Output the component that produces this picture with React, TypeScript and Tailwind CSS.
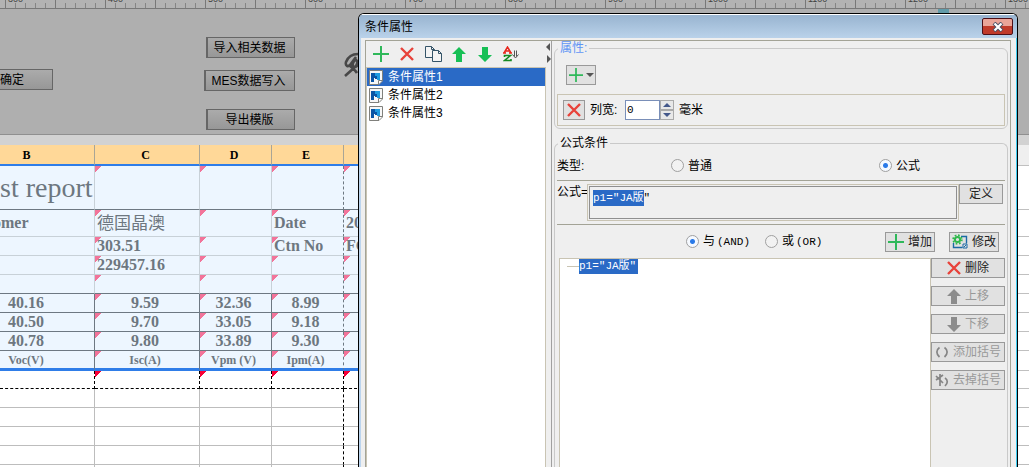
import { useEffect, useRef, type ReactNode } from "react";
import clsx from "clsx";

const majors = [300, 400, 500, 600, 700, 800, 900, 1000, 1100, 1200, 1300];

function Ruler() {
  return (
    <svg className="block h-[9px] w-full bg-[#b3b3b3]" aria-hidden="true">
      <defs>
        <pattern id="minor" width="10" height="9" patternUnits="userSpaceOnUse">
          <rect x="5" y="3" width="1" height="5" fill="#858585" />
        </pattern>
        <pattern id="major" width="50" height="9" patternUnits="userSpaceOnUse">
          <rect x="5" y="0" width="1" height="8" fill="#787878" />
        </pattern>
      </defs>
      <rect width="100%" height="9" fill="url(#minor)" />
      <rect width="100%" height="9" fill="url(#major)" />
      <rect y="8" width="100%" height="1" fill="#787878" />
      {majors.map((n, i) => (
        <text key={n} x={8 + i * 100} y="2" fontSize="9" fill="#404040">
          {n}
        </text>
      ))}
    </svg>
  );
}

const formButton =
  "h-[21px] border border-l-2 border-[#666] bg-linear-to-b from-[#ababab] to-[#979797] pr-[3px] text-xs leading-none text-black";

function FormArea() {
  return (
    <div className="flex h-[126px] items-start border-b border-[#8f8f8f] bg-[#afafaf]">
      <button className="mt-[60px] h-[21px] w-[53px] border border-l-0 border-[#666] bg-linear-to-b from-[#ababab] to-[#979797] text-left text-xs leading-none">
        确定
      </button>
      <div className="ml-[151px] mt-7 flex w-[91px] flex-col items-end">
        <button className={clsx(formButton, "w-[89px]")}>导入相关数据</button>
        <button className={clsx(formButton, "mt-3 w-[91px]")}>MES数据写入</button>
        <button className={clsx(formButton, "mt-[18px] w-[89px]")}>导出模版</button>
      </div>
      <svg className="ml-[49px] mt-[43px]" width="20" height="26" viewBox="0 0 20 26" fill="none" stroke="#484848" strokeWidth="2.600" aria-hidden="true">
        <path d="M14 2C8 2 4 5 2 10c-1 4 2 5 4 3l6-8M1 24l10-9c3-3 3-6 1-7-2 0-4 4-3 6s3 1 5-1M6 13c0 3 4 3 7 8" />
      </svg>
      <div className="ml-auto mr-20 h-1 w-[11px] bg-[#629ba9]" />
    </div>
  );
}

const dark = "border-b-[#6d7882]";
const pale = "border-b-[#c8d1d8]";

type Row = { h: string; line: string; side: string; font: string; center?: boolean; cells: string[] };

const rows: Row[] = [
  { h: "h-[44px]", line: dark, side: "border-r-[#c8d1d8]", font: "text-[28px]", cells: ["st report", "", "", "", ""] },
  { h: "h-[27px]", line: pale, side: "border-r-[#c8d1d8]", font: "text-[16px] font-bold", cells: ["omer", "德国晶澳", "", "Date", "20"] },
  { h: "h-[19px]", line: pale, side: "border-r-[#c8d1d8]", font: "text-[16px] font-bold", cells: ["", "303.51", "", "Ctn No", "FC"] },
  { h: "h-[19px]", line: pale, side: "border-r-[#c8d1d8]", font: "text-[16px] font-bold", cells: ["", "229457.16", "", "", ""] },
  { h: "h-[19px]", line: dark, side: "border-r-[#c8d1d8]", font: "text-[16px]", cells: ["", "", "", "", ""] },
  { h: "h-[19px]", line: dark, side: "border-r-[#6d7882]", font: "text-[16px] font-bold", center: true, cells: ["40.16", "9.59", "32.36", "8.99", ""] },
  { h: "h-[19px]", line: dark, side: "border-r-[#6d7882]", font: "text-[16px] font-bold", center: true, cells: ["40.50", "9.70", "33.05", "9.18", ""] },
  { h: "h-[19px]", line: dark, side: "border-r-[#6d7882]", font: "text-[16px] font-bold", center: true, cells: ["40.78", "9.80", "33.89", "9.30", ""] },
  { h: "h-[20px]", line: "border-b-[3px] border-b-[#2f7de8]", side: "border-r-[#6d7882]", font: "text-[12px] font-bold", center: true, cells: ["Voc(V)", "Isc(A)", "Vpm (V)", "Ipm(A)", ""] },
];

const pinkCorner =
  "bg-[linear-gradient(to_bottom_right,#f2749a_50%,transparent_50%)] bg-[length:7px_6px] bg-no-repeat";
const redCorner =
  "bg-[linear-gradient(to_bottom_right,#f80038_50%,transparent_50%)] bg-[length:7px_6px] bg-no-repeat";

function Sheet() {
  return (
    <table className="w-full table-fixed border-separate border-spacing-0 bg-white font-['Liberation_Serif','Noto_Sans_CJK_SC',serif] leading-none text-[#6d7780]">
      <colgroup>
        <col className="w-[95px]" />
        <col className="w-[105px]" />
        <col className="w-[72px]" />
        <col className="w-[72px]" />
        <col />
        <col className="w-[120px]" />
      </colgroup>
      <thead>
        <tr className="h-[21px]">
          {["B", "C", "D", "E", ""].map((name, i) => (
            <th
              key={i}
              className={clsx(
                "border-b-2 border-r border-b-[#2f7de8] border-r-[#a9a596] bg-[#ffd898] p-0 text-[12px] font-bold text-black",
                i === 0 ? "pr-[41px]" : "pr-[3px]",
              )}
            >
              {name}
            </th>
          ))}
          <th className="border-b border-[#c0c0c0] bg-[#efefef] p-0" />
        </tr>
      </thead>
      <tbody>
        {rows.map((row, r) => (
          <tr key={r} className={row.h}>
            {row.cells.map((cell, c) => (
              <td
                key={c}
                className={clsx(
                  "overflow-hidden whitespace-nowrap border-b border-r bg-[#edf6ff] p-0",
                  row.line,
                  c === 3 ? "border-dashed border-r-[#6d7882] [border-bottom-style:solid]" : row.side,
                  cell === "德国晶澳" ? "text-[17px] font-normal" : row.font,
                  c > 0 && pinkCorner,
                  row.center ? "text-center" : c > 0 && "pl-[2px]",
                  row.center && (c === 0 ? "pr-[42px]" : "pr-[4px]"),
                  cell === "omer" && "indent-[-7px]",
                )}
              >
                {cell}
              </td>
            ))}
            <td className="border-b border-[#c0c0c0] p-0" />
          </tr>
        ))}
        <tr className="h-[18px]">
          {[0, 1, 2, 3, 4].map((c) => (
            <td key={c} className={clsx("border-b border-r border-dashed border-black p-0", c > 0 && redCorner)} />
          ))}
          <td className="border-b border-[#c0c0c0] p-0" />
        </tr>
        {[0, 1, 2, 3, 4].map((r) => (
          <tr key={r} className="h-[19px]">
            {[0, 1, 2, 3, 4, 5].map((c) => (
              <td
                key={c}
                className={clsx(
                  "border-b border-b-[#bdbdbd] p-0",
                  c < 5 && "border-r",
                  c === 3 ? "border-dashed border-r-black [border-bottom-style:solid]" : "border-r-[#bdbdbd]",
                )}
              />
            ))}
          </tr>
        ))}
      </tbody>
    </table>
  );
}

function PlusIcon({ size = 16 }: { size?: number }) {
  return (
    <svg width={size} height={size} viewBox="0 0 16 16" fill="#2fb85a" aria-hidden="true">
      <path d="M7 0h2v7h7v2H9v7H7V9H0V7h7z" />
    </svg>
  );
}

function CrossIcon() {
  return (
    <svg width="14" height="14" viewBox="0 0 14 14" stroke="#e8423a" strokeWidth="2.4" aria-hidden="true">
      <path d="M1 1l12 12M13 1L1 13" />
    </svg>
  );
}

function ArrowIcon({ down, fill }: { down?: boolean; fill: string }) {
  return (
    <svg width="14" height="15" viewBox="0 0 14 15" fill={fill} aria-hidden="true">
      <path d={down ? "M4 0h6v8h4l-7 7-7-7h4z" : "M4 15h6V7h4L7 0 0 7h4z"} />
    </svg>
  );
}

function CopyIcon() {
  return (
    <svg width="17" height="16" viewBox="0 0 17 16" fill="#f4f4f4" stroke="#355468" aria-hidden="true">
      <path d="M.5.5h6l3 3v8h-9z" />
      <path d="M6.500 .5v3h3" fill="none" />
      <path d="M7.500 4.500h6l3 3v8h-9z" />
      <path d="M13.500 4.500v3h3" fill="none" />
    </svg>
  );
}

function SortIcon() {
  return (
    <svg width="16" height="16" viewBox="0 0 16 16" fill="none" aria-hidden="true">
      <path d="M1 7l3.500-6L8 7M2.500 5h4M0 7h3M6 7h3" stroke="#e8271c" strokeWidth="1.500" />
      <path d="M1.500 11V9.500h6l-6 5H8V13" stroke="#168a22" strokeWidth="1.600" />
      <path d="M11.500 4.500v6M13.500 4.500v6M9.500 8.500l3 3.500 3-3.500" stroke="#555" />
    </svg>
  );
}

function SheetIcon() {
  return (
    <svg width="14" height="15" viewBox="0 0 14 15" aria-hidden="true">
      <path d="M.5.5h13v10.500l-3.500 3.500H.5z" fill="#f7f7f7" stroke="#80807c" />
      <path d="M2 3h4v3h2v3H6v-1H5v4H2z" fill="#0b55a5" />
      <path d="M6 3h5v7H8V6H6z" fill="#1f9be0" />
      <path d="M9.500 14v-3.500h3.500" fill="#fff" stroke="#80807c" />
    </svg>
  );
}

function EditIcon() {
  return (
    <svg width="16" height="15" viewBox="0 0 16 15" fill="none" aria-hidden="true">
      <path d="M9 2.500h5.500v7M1.500 9v4.500h9" stroke="#1b6aa5" strokeWidth="1.400" />
      <path d="M11 10h4v4h-4zM12 13l2-2" stroke="#1b6aa5" />
      <circle cx="5.500" cy="5.500" r="2.600" stroke="#2fb84c" strokeWidth="2" />
      <circle cx="5.500" cy="5.500" r="4.400" stroke="#2fb84c" strokeWidth="1.600" strokeDasharray="1.730 1.730" />
    </svg>
  );
}

function BracketIcon({ struck }: { struck?: boolean }) {
  return (
    <svg width="14" height="13" viewBox="0 0 14 13" fill="none" stroke="#858585" strokeWidth="1.700" aria-hidden="true">
      {struck ? (
        <path d="M1 2l7 7M8 1L1 6M5 0v12M10 4c3 2 3 5 0 8" />
      ) : (
        <path d="M4.500 1.500C1 4 1 8 4.500 11M9.500 1.500C13 4 13 8 9.500 11" />
      )}
    </svg>
  );
}

const btn = "flex h-5 items-center justify-center border border-[#999] bg-[#e1e1e1] text-xs leading-none";

function SideButton({ icon, label, disabled }: { icon: ReactNode; label: string; disabled?: boolean }) {
  return (
    <button disabled={disabled} className={clsx(btn, "w-full gap-1", disabled ? "text-[#999]" : "text-[#222]")}>
      {icon}
      {label}
    </button>
  );
}

function Radio({ name, label, mono, checked }: { name: string; label: string; mono?: string; checked?: boolean }) {
  return (
    <label className="flex items-center gap-1">
      <input
        type="radio"
        name={name}
        defaultChecked={checked}
        className="h-[13px] w-[13px] appearance-none rounded-full border border-[#a0a0a0] bg-[#f2f2f2] checked:bg-[radial-gradient(circle,#2a7ae8_2px,#f5f9ff_3px)]"
      />
      <span>
        {label}
        {mono && <span className="pl-[2px] font-['Liberation_Mono',monospace] text-[11px]">{mono}</span>}
      </span>
    </label>
  );
}

function ToolButton({ label, children }: { label: string; children: ReactNode }) {
  return (
    <button aria-label={label} className="flex w-[26px] items-center justify-center">
      {children}
    </button>
  );
}

function ConditionList() {
  return (
    <div className="flex flex-col">
      <div className="flex h-[26px] items-center pl-[2px]">
        <ToolButton label="新增"><PlusIcon /></ToolButton>
        <ToolButton label="删除"><CrossIcon /></ToolButton>
        <ToolButton label="复制"><CopyIcon /></ToolButton>
        <ToolButton label="上移"><ArrowIcon fill="#17bf55" /></ToolButton>
        <ToolButton label="下移"><ArrowIcon down fill="#17bf55" /></ToolButton>
        <ToolButton label="排序"><SortIcon /></ToolButton>
      </div>
      <ul className="flex-1 border border-b-0 border-[#c9c4b3] bg-white">
        {["条件属性1", "条件属性2", "条件属性3"].map((name, i) => (
          <li
            key={name}
            className={clsx("flex h-[18px] items-center gap-[5px] pl-[2px] text-xs", i === 0 && "bg-[#2a6ac6] text-white")}
          >
            <SheetIcon />
            {name}
          </li>
        ))}
      </ul>
    </div>
  );
}

function Properties() {
  return (
    <fieldset className="min-w-0 rounded-md border border-[#c9c9c9] px-[2px] pb-[2px] pt-0">
      <legend className="ml-px px-[2px] leading-[15px] text-[#5f95f5]">属性:</legend>
      <button aria-label="添加属性" className={clsx(btn, "ml-[9px] mt-[9px] w-[30px] gap-[3px]")}>
        <PlusIcon size={14} />
        <svg width="8" height="4" viewBox="0 0 8 4" fill="#555" aria-hidden="true">
          <path d="M0 0h8L4 4z" />
        </svg>
      </button>
      <div className="mt-[9px] flex h-8 items-center border border-[#c9c4b3] px-[5px]">
        <button aria-label="移除列宽" className={clsx(btn, "w-[22px]")}><CrossIcon /></button>
        <label htmlFor="colWidth" className="ml-[5px] w-[35px]">列宽:</label>
        <input
          id="colWidth"
          defaultValue="0"
          className="h-[20px] w-[35px] border border-[#7a8fb8] bg-white pl-px font-['Liberation_Mono',monospace] text-[11px] outline-none"
        />
        <div className="flex w-[14px] flex-col">
          <button aria-label="增大" className="flex h-[10px] items-center justify-center border border-[#aaa] bg-[#e8e8e8]">
            <svg width="8" height="4" viewBox="0 0 8 4" fill="#44588a" aria-hidden="true"><path d="M0 4h8L4 0z" /></svg>
          </button>
          <button aria-label="减小" className="flex h-[10px] items-center justify-center border border-[#aaa] bg-[#e8e8e8]">
            <svg width="8" height="4" viewBox="0 0 8 4" fill="#44588a" aria-hidden="true"><path d="M0 0h8L4 4z" /></svg>
          </button>
        </div>
        <span className="ml-[5px]">毫米</span>
      </div>
    </fieldset>
  );
}

function Formula() {
  const box = useRef<HTMLTextAreaElement>(null);
  useEffect(() => {
    box.current?.focus({ preventScroll: true });
    box.current?.setSelectionRange(0, 7);
  }, []);

  return (
    <fieldset className="mt-[7px] flex min-w-0 flex-1 flex-col rounded-t-md border border-b-0 border-[#c9c9c9] px-[2px] pt-0">
      <legend className="ml-px px-[2px] leading-[15px]">公式条件</legend>
      <div className="grid h-[30px] grid-cols-[114px_208px_1fr] items-center border-b border-[#a3a396]">
        <span>类型:</span>
        <Radio name="kind" label="普通" />
        <Radio name="kind" label="公式" checked />
      </div>
      <div className="flex h-[44px] items-start border-b border-[#a3a396] pr-[2px] pt-[3px]">
        <label htmlFor="formula" className="w-[30px] whitespace-nowrap">公式=</label>
        <div className="flex h-[37px] flex-1 border border-[#c9c4b3] p-px">
          <textarea
            id="formula"
            ref={box}
            defaultValue={'p1="JA版"'}
            className="block w-full resize-none border border-[#8f8f8f] bg-[#efefef] px-[3px] py-[3px] font-['Liberation_Mono','Noto_Sans_CJK_SC',monospace] text-[11px] leading-4 outline-none selection:bg-[#2a6ac6] selection:text-white"
          />
        </div>
        <button className={clsx(btn, "w-11 text-[#222]")}>定义</button>
      </div>
      <div className="flex h-[33px] items-center pl-[129px] pr-[6px]">
        <div className="w-[79px]"><Radio name="join" label="与" mono="(AND)" checked /></div>
        <Radio name="join" label="或" mono="(OR)" />
        <button className={clsx(btn, "ml-auto w-[50px] gap-1 text-[#222]")}><PlusIcon />增加</button>
        <button className={clsx(btn, "ml-[14px] w-[50px] gap-1 text-[#222]")}><EditIcon />修改</button>
      </div>
      <div className="flex flex-1 pl-[2px]">
        <div className="flex flex-1 items-start border border-b-0 border-[#c9c4b3] bg-white pl-[7px]">
          <span className="mt-[7px] h-px w-3 bg-[#c9c4b3]" />
          <span className="bg-[#2a6ac6] pr-[2px] font-['Liberation_Mono','Noto_Sans_CJK_SC',monospace] text-[11px] leading-[15px] text-white">
            p1="JA版"
          </span>
        </div>
        <div className="flex w-[74px] flex-col gap-2">
          <SideButton icon={<CrossIcon />} label="删除" />
          <SideButton icon={<ArrowIcon fill="#8c8c8c" />} label="上移" disabled />
          <SideButton icon={<ArrowIcon down fill="#8c8c8c" />} label="下移" disabled />
          <SideButton icon={<BracketIcon />} label="添加括号" disabled />
          <SideButton icon={<BracketIcon struck />} label="去掉括号" disabled />
        </div>
      </div>
    </fieldset>
  );
}

function ConditionDialog() {
  return (
    <section
      role="dialog"
      aria-labelledby="title"
      className="absolute bottom-0 left-[358px] right-[11px] top-[13px] flex flex-col overflow-hidden rounded-t-md border border-b-0 border-black bg-[#efefef] text-xs leading-4 text-black"
    >
      <header className="flex h-6 shrink-0 items-center justify-between border-t border-white bg-linear-to-b from-[#98b4d0] to-[#bad2ea] pl-[6px] pr-1">
        <h1 id="title">条件属性</h1>
        <button aria-label="关闭" className="flex h-[17px] w-[31px] items-center justify-center rounded-[2px] border border-[#4d1018] bg-linear-to-b from-[#eaa498] from-45% to-[#c03a2a] to-50%">
          <svg width="12" height="10" viewBox="0 0 12 10" aria-hidden="true">
            <path d="M2 1l8 8M10 1L2 9" stroke="#4a5065" strokeWidth="4" />
            <path d="M2.500 1.500l7 7M9.500 1.500l-7 7" stroke="#fff" strokeWidth="2.200" />
          </svg>
        </button>
      </header>
      <div className="flex flex-1 border-l-2 border-r border-l-[#bcd5ee] border-r-[#3ccdf0] pl-1 pr-[5px] pt-[2px]">
        <div className="grid flex-1 grid-cols-[180px_6px_1fr] border border-b-0 border-[#a3a396]">
          <ConditionList />
          <div className="border-r border-[#a0a0a0] pt-[2px]">
            <svg width="5" height="20" viewBox="0 0 5 20" fill="#555" aria-hidden="true">
              <path d="M4 0v8L0 4zM1 12v8l4-4z" />
            </svg>
          </div>
          <div className="flex min-w-0 flex-col px-[2px]">
            <Properties />
            <Formula />
          </div>
        </div>
      </div>
    </section>
  );
}

export default function App() {
  return (
    <main className="relative h-screen overflow-hidden bg-white font-['Liberation_Sans','Noto_Sans_CJK_SC',sans-serif]">
      <Ruler />
      <FormArea />
      <div className="h-[10px] bg-[#d2d2d2]" />
      <Sheet />
      <ConditionDialog />
    </main>
  );
}
